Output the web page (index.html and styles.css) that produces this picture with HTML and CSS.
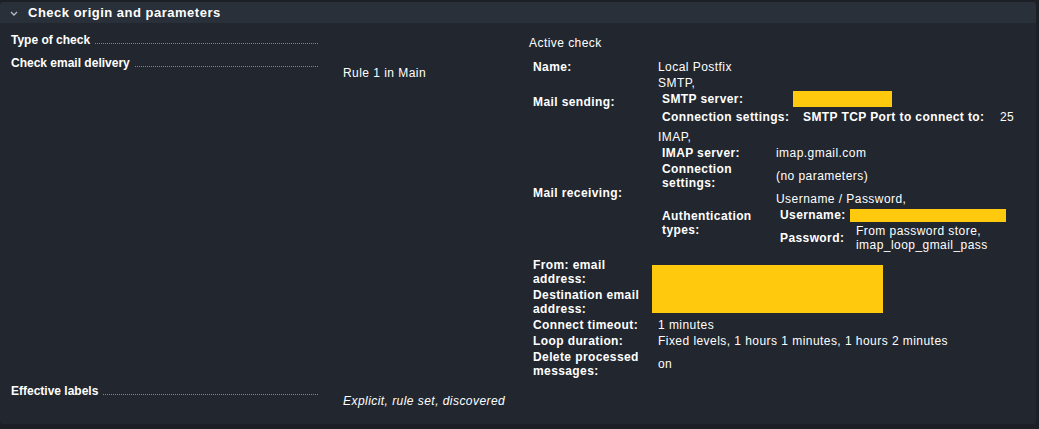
FILE: index.html
```html
<!DOCTYPE html>
<html>
<head>
<meta charset="utf-8">
<link rel="stylesheet" href="styles.css">
</head>
<body>
<div class="section">
  <div class="head">
    <svg class="chev" width="8" height="5" viewBox="0 0 8 5"><path d="M1 1L4 4L7 1" fill="none" stroke="#b9bec4" stroke-width="1.3"/></svg>
    <span class="head-title">Check origin and parameters</span>
  </div>

  <div class="row r1">
    <div class="title"><span>Type of check</span><span class="leader"></span></div>
    <div class="rule"></div>
    <div class="val">Active check</div>
  </div>

  <div class="row r2">
    <div class="title"><span>Check email delivery</span><span class="leader"></span></div>
    <div class="rule">Rule 1 in Main</div>
    <div class="val">
      <div class="kv main">
        <div class="k">Name:</div>
        <div class="v">Local Postfix</div>

        <div class="k">Mail sending:</div>
        <div class="v">SMTP,
          <div class="kv sub smtp">
            <div class="k">SMTP server:</div>
            <div class="v"><div class="redact r-smtp"></div></div>
            <div class="k">Connection settings:</div>
            <div class="v">
              <div class="kv sub port">
                <div class="k">SMTP TCP Port to connect to:</div>
                <div class="v">25</div>
              </div>
            </div>
          </div>
        </div>

        <div class="k">Mail receiving:</div>
        <div class="v">IMAP,
          <div class="kv sub imap">
            <div class="k">IMAP server:</div>
            <div class="v">imap.gmail.com</div>
            <div class="k">Connection<br>settings:</div>
            <div class="v">(no parameters)</div>
            <div class="k">Authentication<br>types:</div>
            <div class="v">Username / Password,
              <div class="kv sub auth">
                <div class="k">Username:</div>
                <div class="v"><div class="redact r-user"></div></div>
                <div class="k">Password:</div>
                <div class="v">From password store,<br>imap_loop_gmail_pass</div>
              </div>
            </div>
          </div>
        </div>

        <div class="k">From: email<br>address:</div>
        <div class="v"><div class="redact r-mail"></div></div>

        <div class="k">Destination email<br>address:</div>
        <div class="v"></div>

        <div class="k">Connect timeout:</div>
        <div class="v">1 minutes</div>

        <div class="k">Loop duration:</div>
        <div class="v">Fixed levels, 1 hours 1 minutes, 1 hours 2 minutes</div>

        <div class="k">Delete processed<br>messages:</div>
        <div class="v">on</div>
      </div>
    </div>
  </div>

  <div class="row r3">
    <div class="title"><span>Effective labels</span><span class="leader"></span></div>
    <div class="rule labels">Explicit, rule set, discovered</div>
    <div class="val"></div>
  </div>
</div>
</body>
</html>
```

FILE: styles.css
```css
html, body {
  margin: 0;
  padding: 0;
}

body {
  background: #1c2026;
  font-family: "Liberation Sans", Arial, sans-serif;
  font-size: 12px;
  line-height: 14px;
  color: #ffffff;
  letter-spacing: 0.45px;
}

.section {
  width: 1036px;
  margin-top: 2px;
  background: #22272f;
  border-radius: 3px;
  padding-bottom: 16px;
}

.head {
  height: 21px;
  display: flex;
  align-items: center;
  background: #29303a;
  border-radius: 3px 3px 0 0;
  padding-left: 10px;
}

.chev {
  margin-top: 2px;
  margin-right: 10px;
  flex: none;
}

.head-title {
  font-size: 13px;
  font-weight: bold;
  letter-spacing: 0.5px;
  line-height: 21px;
  color: #ffffff;
}

.row {
  display: grid;
  grid-template-columns: 343px 186px 1fr;
  align-items: start;
}

.title {
  display: flex;
  align-items: baseline;
  padding-left: 11px;
  width: 307px;
  font-weight: bold;
  letter-spacing: 0;
  white-space: nowrap;
}

.leader {
  flex: 1;
  margin-left: 5px;
  border-bottom: 1px dotted #7e848c;
}

.r1 { padding-top: 10px; }
.r1 .val { margin-top: 3px; }

.r2 { padding-top: 6px; }
.r2 .rule { margin-top: 10px; }

.r3 { padding-top: 4px; }
.r3 .rule { margin-top: 10px; }

.labels {
  font-style: italic;
}

.kv {
  display: grid;
  align-items: center;
  row-gap: 2px;
}

.kv > .k {
  font-weight: bold;
  letter-spacing: 0.4px;
}

.main {
  grid-template-columns: 125px 1fr;
  margin-top: 2px;
  padding: 2px 0 2px 4px;
}

.sub {
  padding: 2px 0 2px 4px;
}

.smtp { grid-template-columns: 137px 1fr; }
.port { grid-template-columns: 197px 1fr; }
.imap { grid-template-columns: 114px 1fr; }
.auth { grid-template-columns: 76px 1fr; }

.redact {
  background: #ffc90e;
}

.r-smtp {
  width: 99px;
  height: 16px;
  margin: -1px 0 -1px -6px;
}

.r-user {
  width: 156px;
  height: 13px;
  margin: 1px 0 0 -6px;
}

.r-mail {
  width: 231px;
  height: 48px;
  margin: 7px 0 -27px -6px;
}
```
